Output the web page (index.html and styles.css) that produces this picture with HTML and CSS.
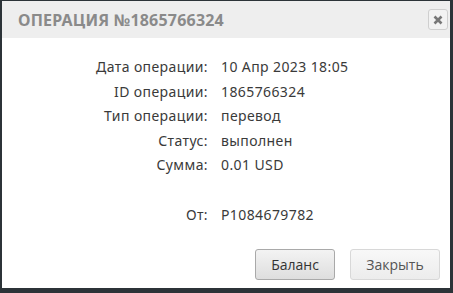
FILE: index.html
```html
<!DOCTYPE html>
<html lang="ru">
<head>
    <meta charset="UTF-8">
    <title>Операция</title>
    <link rel="stylesheet" href="styles.css">
</head>
<body>
    <div class="dialog">
        <div class="dialog-header">
            <h2>Операция №1865766324</h2>
            <button class="close-btn" title="Закрыть">
                <svg width="10" height="10" viewBox="0 0 10 10">
                    <path d="M1.5 1.5 L8.5 8.5 M8.5 1.5 L1.5 8.5" stroke="#777" stroke-width="2.6" stroke-linecap="butt"/>
                </svg>
            </button>
        </div>
        <div class="dialog-body">
            <div class="info">
                <div class="label">Дата операции:</div>
                <div class="value">10 Апр 2023 18:05</div>
                <div class="label">ID операции:</div>
                <div class="value">1865766324</div>
                <div class="label">Тип операции:</div>
                <div class="value">перевод</div>
                <div class="label">Статус:</div>
                <div class="value">выполнен</div>
                <div class="label">Сумма:</div>
                <div class="value">0.01 USD</div>
                <div class="spacer"></div>
                <div class="label">От:</div>
                <div class="value">P1084679782</div>
            </div>
        </div>
        <div class="dialog-footer">
            <button class="btn">Баланс</button>
            <button class="btn btn-light">Закрыть</button>
        </div>
    </div>
</body>
</html>
```

FILE: styles.css
```css
* {
    margin: 0;
    padding: 0;
    box-sizing: border-box;
}

body {
    width: 453px;
    height: 293px;
    background-color: #2c3338;
    padding: 1px 3px 5px 2px;
    font-family: "Noto Sans", "Open Sans", sans-serif;
}

.dialog {
    background: #fff;
    height: 287px;
    display: flex;
    flex-direction: column;
    border-radius: 2px 2px 0 0;
}

.dialog-header {
    background: #eeeeee;
    height: 37px;
    display: flex;
    align-items: center;
    justify-content: space-between;
    padding: 0 2px 0 16px;
}

.dialog-header h2 {
    font-size: 16px;
    font-weight: bold;
    text-transform: uppercase;
    letter-spacing: 0.2px;
    color: #8a8a8a;
    margin-top: 1px;
}

.close-btn {
    width: 20px;
    height: 21px;
    border: 1px solid #cfcfcf;
    border-radius: 3px;
    background: #f2f2f2;
    display: flex;
    align-items: center;
    justify-content: center;
}

.dialog-body {
    flex: 1;
    padding-top: 17px;
}

.info {
    display: grid;
    grid-template-columns: 206px 1fr;
    column-gap: 13px;
    row-gap: 0;
    font-size: 14px;
    letter-spacing: 0.4px;
    color: #3a3a3a;
}

.info .label,
.info .value {
    height: 24.6px;
    line-height: 24px;
}

.info .label {
    text-align: right;
}

.spacer {
    grid-column: 1 / 3;
    height: 25px;
}

.dialog-footer {
    display: flex;
    justify-content: flex-end;
    gap: 15px;
    padding: 0 10px 8px 0;
}

.btn {
    width: 80px;
    height: 31px;
    font-family: "Open Sans", "DejaVu Sans", sans-serif;
    font-size: 14px;
    color: #333;
    background: linear-gradient(#f3f3f3, #dedede);
    border: 1px solid #a9a9a9;
    border-radius: 3px;
}

.btn-light {
    width: 90px;
    color: #555;
    background: linear-gradient(#f8f8f8, #ececec);
    border-color: #d8d8d8;
}
```
